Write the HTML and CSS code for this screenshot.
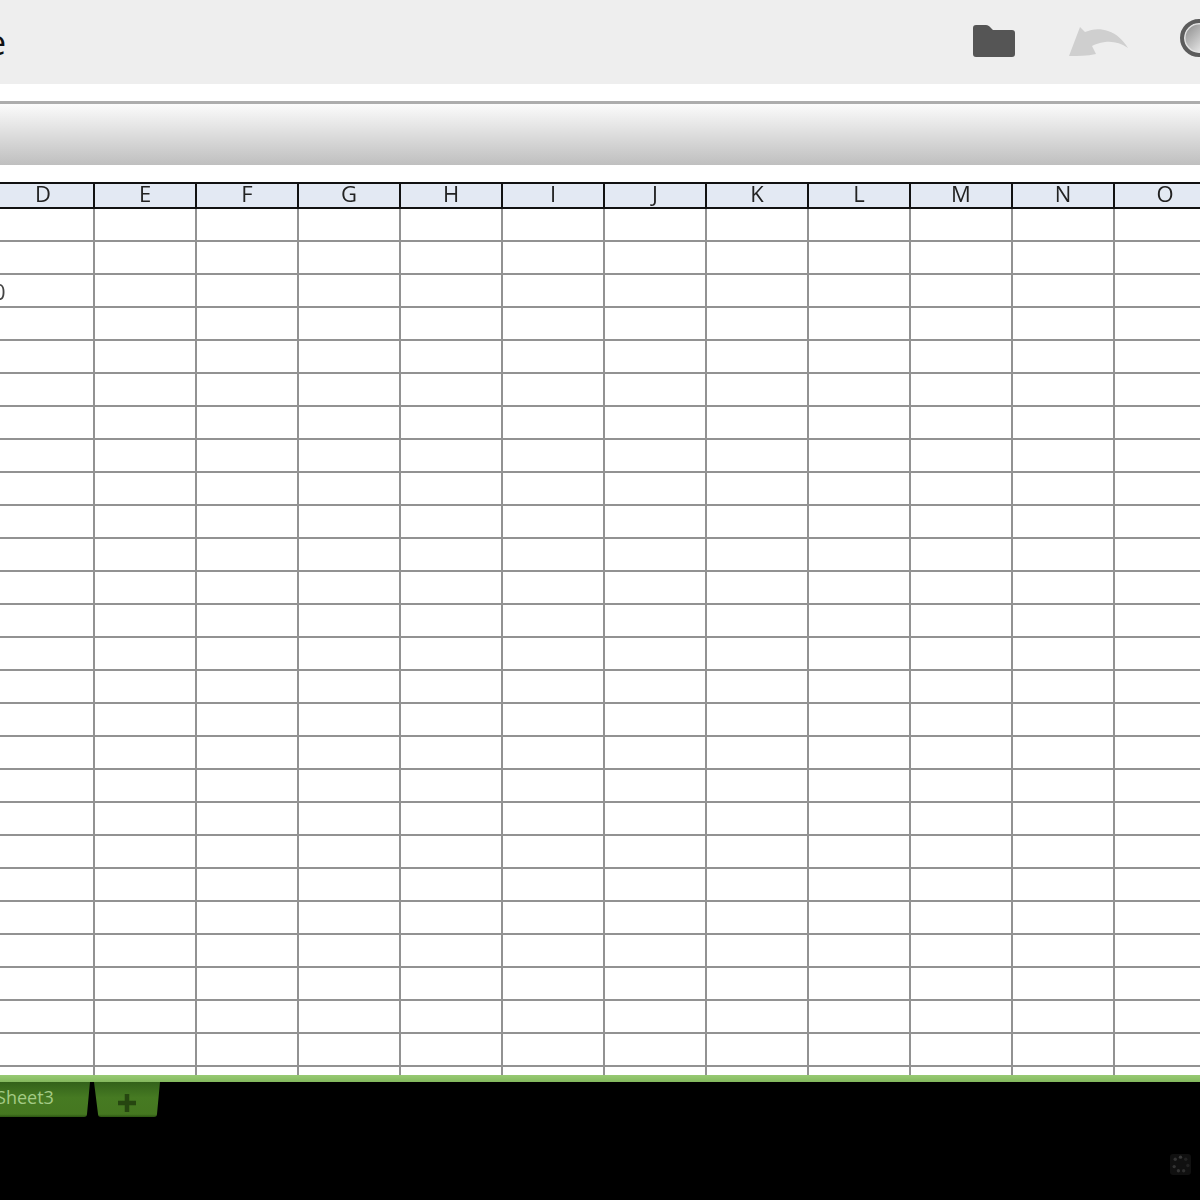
FILE: index.html
```html
<!DOCTYPE html>
<html lang="en">
<head>
<meta charset="utf-8">
<title>Spreadsheet</title>
<link rel="stylesheet" href="styles.css">
</head>
<body>
<div class="app">
  <header class="toolbar">
    <div class="doc-title">e</div>
    <div class="actions">
      <svg class="icon-folder" viewBox="0 0 42 32"><path fill="#555" d="M3 0h10c2 0 3 1 4 2l3 3h19c2 0 3 1 3 3v21c0 2-1 3-3 3H3c-2 0-3-1-3-3V3c0-2 1-3 3-3z"/></svg>
      <svg class="icon-undo" viewBox="0 0 60 30"><path fill="#cfcfcf" d="M11 0l5 5c7-3 15-4 23-1 9 3 15 9 20 17-7-5-15-7-23-6-6 1-10 2-13 4l4 8c-9 2-18 2-27 2z"/></svg>
      <div class="icon-search"></div>
    </div>
  </header>
  <div class="rule"></div>
  <div class="formula-bar"></div>
  <main class="sheet">
    <table class="grid">
      <thead>
        <tr><th>D</th><th>E</th><th>F</th><th>G</th><th>H</th><th>I</th><th>J</th><th>K</th><th>L</th><th>M</th><th>N</th><th>O</th></tr>
      </thead>
      <tbody>
        <tr><td></td><td></td><td></td><td></td><td></td><td></td><td></td><td></td><td></td><td></td><td></td><td></td></tr>
        <tr><td></td><td></td><td></td><td></td><td></td><td></td><td></td><td></td><td></td><td></td><td></td><td></td></tr>
        <tr><td>0</td><td></td><td></td><td></td><td></td><td></td><td></td><td></td><td></td><td></td><td></td><td></td></tr>
        <tr><td></td><td></td><td></td><td></td><td></td><td></td><td></td><td></td><td></td><td></td><td></td><td></td></tr>
        <tr><td></td><td></td><td></td><td></td><td></td><td></td><td></td><td></td><td></td><td></td><td></td><td></td></tr>
        <tr><td></td><td></td><td></td><td></td><td></td><td></td><td></td><td></td><td></td><td></td><td></td><td></td></tr>
        <tr><td></td><td></td><td></td><td></td><td></td><td></td><td></td><td></td><td></td><td></td><td></td><td></td></tr>
        <tr><td></td><td></td><td></td><td></td><td></td><td></td><td></td><td></td><td></td><td></td><td></td><td></td></tr>
        <tr><td></td><td></td><td></td><td></td><td></td><td></td><td></td><td></td><td></td><td></td><td></td><td></td></tr>
        <tr><td></td><td></td><td></td><td></td><td></td><td></td><td></td><td></td><td></td><td></td><td></td><td></td></tr>
        <tr><td></td><td></td><td></td><td></td><td></td><td></td><td></td><td></td><td></td><td></td><td></td><td></td></tr>
        <tr><td></td><td></td><td></td><td></td><td></td><td></td><td></td><td></td><td></td><td></td><td></td><td></td></tr>
        <tr><td></td><td></td><td></td><td></td><td></td><td></td><td></td><td></td><td></td><td></td><td></td><td></td></tr>
        <tr><td></td><td></td><td></td><td></td><td></td><td></td><td></td><td></td><td></td><td></td><td></td><td></td></tr>
        <tr><td></td><td></td><td></td><td></td><td></td><td></td><td></td><td></td><td></td><td></td><td></td><td></td></tr>
        <tr><td></td><td></td><td></td><td></td><td></td><td></td><td></td><td></td><td></td><td></td><td></td><td></td></tr>
        <tr><td></td><td></td><td></td><td></td><td></td><td></td><td></td><td></td><td></td><td></td><td></td><td></td></tr>
        <tr><td></td><td></td><td></td><td></td><td></td><td></td><td></td><td></td><td></td><td></td><td></td><td></td></tr>
        <tr><td></td><td></td><td></td><td></td><td></td><td></td><td></td><td></td><td></td><td></td><td></td><td></td></tr>
        <tr><td></td><td></td><td></td><td></td><td></td><td></td><td></td><td></td><td></td><td></td><td></td><td></td></tr>
        <tr><td></td><td></td><td></td><td></td><td></td><td></td><td></td><td></td><td></td><td></td><td></td><td></td></tr>
        <tr><td></td><td></td><td></td><td></td><td></td><td></td><td></td><td></td><td></td><td></td><td></td><td></td></tr>
        <tr><td></td><td></td><td></td><td></td><td></td><td></td><td></td><td></td><td></td><td></td><td></td><td></td></tr>
        <tr><td></td><td></td><td></td><td></td><td></td><td></td><td></td><td></td><td></td><td></td><td></td><td></td></tr>
        <tr><td></td><td></td><td></td><td></td><td></td><td></td><td></td><td></td><td></td><td></td><td></td><td></td></tr>
        <tr><td></td><td></td><td></td><td></td><td></td><td></td><td></td><td></td><td></td><td></td><td></td><td></td></tr>
        <tr><td></td><td></td><td></td><td></td><td></td><td></td><td></td><td></td><td></td><td></td><td></td><td></td></tr>
      </tbody>
    </table>
  </main>
  <footer class="tabs-area">
    <div class="tab-strip"></div>
    <div class="tabs">
      <div class="tab tab-sheet">Sheet3</div>
      <div class="tab tab-add">
        <svg class="plus" viewBox="0 0 16 16"><path fill="#264610" d="M6 0h4v6h6v4h-6v6H6v-6H0V6h6z"/></svg>
      </div>
    </div>
    <div class="status">
      <svg class="spinner" viewBox="0 0 20 20">
        <rect width="20" height="20" rx="3" fill="#101010"/>
        <circle cx="5" cy="5" r="1.6" fill="#333"/>
        <circle cx="10" cy="3" r="1.6" fill="#3a3a3a"/>
        <circle cx="15" cy="5" r="1.6" fill="#222"/>
        <circle cx="17" cy="11" r="1.6" fill="#222"/>
        <circle cx="13" cy="16" r="1.6" fill="#2e2e2e"/>
        <circle cx="8" cy="16" r="1.6" fill="#333"/>
        <circle cx="4" cy="12" r="1.6" fill="#333"/>
      </svg>
    </div>
  </footer>
</div>
</body>
</html>
```
FILE: styles.css
```css
* { box-sizing: border-box; }
html, body { margin: 0; padding: 0; background: #fff; }
.app {
  width: 1200px;
  height: 1200px;
  overflow: hidden;
  display: flex;
  flex-direction: column;
  font-family: "Open Sans", "Noto Sans", sans-serif;
  filter: blur(0.45px);
}
.toolbar {
  height: 84px;
  flex: none;
  background: #eeeeee;
  display: flex;
  align-items: center;
  justify-content: space-between;
  overflow: hidden;
}
.doc-title {
  font-size: 34px;
  line-height: 82px;
  color: #111;
  margin-left: -13px;
}
.actions {
  display: flex;
  align-items: flex-start;
  height: 84px;
  margin-right: -18px;
}
.icon-folder { width: 42px; height: 32px; margin: 25px 54px 0 0; }
.icon-undo { width: 60px; height: 30px; margin: 27px 51px 0 0; }
.icon-search {
  width: 38px;
  height: 38px;
  margin-top: 19px;
  border-radius: 50%;
  border: 4px solid #5c5c5c;
  background: linear-gradient(135deg, #858585, #e4e4e4 75%);
  box-shadow: inset 0 0 0 1.5px #e2e2e2;
}
.rule {
  height: 3px;
  flex: none;
  margin-top: 17px;
  background: #acacac;
}
.formula-bar {
  height: 61px;
  flex: none;
  background: linear-gradient(#fbfbfb, #bfbfbf);
}
.sheet {
  flex: none;
  height: 910px;
  padding-top: 17px;
  overflow: hidden;
}
.grid {
  border-collapse: separate;
  border-spacing: 0;
  table-layout: fixed;
  width: 1224px;
  margin-left: -7px;
}
.grid th {
  width: 102px;
  height: 27px;
  padding: 0 0 5px;
  background: #e3e9f3;
  border-top: 2px solid #111;
  border-bottom: 2px solid #111;
  border-right: 2px solid #111;
  font-size: 22px;
  font-weight: 400;
  line-height: 18px;
  color: #222;
  text-align: center;
}
.grid td {
  height: 33px;
  padding: 1px 0 0;
  border-bottom: 2px solid #929292;
  border-right: 2px solid #929292;
  font-size: 22px;
  line-height: 30px;
  color: #444;
}
.tabs-area {
  flex: 1;
  background: #000;
  display: flex;
  flex-direction: column;
}
.tab-strip { height: 7px; flex: none; background: linear-gradient(#98ca74, #84b95e); }
.tabs { display: flex; height: 35px; flex: none; gap: 4px; margin-left: -12px; }
.tab {
  height: 35px;
  background: linear-gradient(#33621a, #467a22 45%, #457720 92%, #2c5512);
  display: flex;
  align-items: center;
  justify-content: center;
}
.tab-sheet {
  width: 102px;
  clip-path: path("M0 0H102L99 32Q99 35 96 35H0Z");
  color: #a4cb86;
  font-size: 18px;
  padding: 0 28px 5px 0;
}
.tab-add {
  width: 66px;
  clip-path: path("M0 0H66L63 32Q63 35 60 35H7Q4 35 4 32Z");
  padding-top: 6px;
}
.plus { width: 18px; height: 18px; }
.status {
  flex: 1;
  display: flex;
  justify-content: flex-end;
  align-items: flex-start;
  padding: 37px 9px 0 0;
}
.spinner { width: 21px; height: 21px; }
```
